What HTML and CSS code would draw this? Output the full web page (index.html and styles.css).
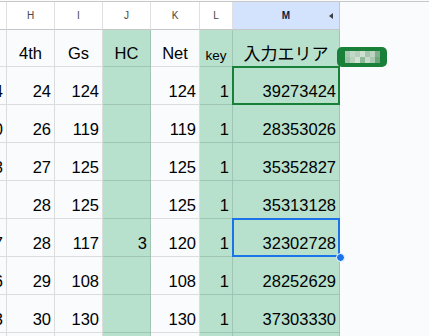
FILE: index.html
```html
<!DOCTYPE html>
<html lang="ja">
<head>
  <meta charset="utf-8">
  <title>スコア入力</title>
  <link rel="stylesheet" href="styles.css">
</head>
<body>
  <div class="viewport">
    <div class="sheet">
      <!-- column letters -->
      <div class="col-hd">G</div>
      <div class="col-hd">H</div>
      <div class="col-hd">I</div>
      <div class="col-hd">J</div>
      <div class="col-hd">K</div>
      <div class="col-hd">L</div>
      <div class="col-hd active">M<span class="hd-menu"></span></div>

      <!-- titles -->
      <div class="cell title">3rd</div>
      <div class="cell title">4th</div>
      <div class="cell title">Gs</div>
      <div class="cell title fill">HC</div>
      <div class="cell title">Net</div>
      <div class="cell title fill small">key</div>
      <div class="cell title fill jp">入力エリア</div>

      <div class="cell">34</div>
      <div class="cell">24</div>
      <div class="cell">124</div>
      <div class="cell fill"></div>
      <div class="cell">124</div>
      <div class="cell fill">1</div>
      <div class="cell fill sel sel-peer">39273424
        <span class="peer-tag">
          <svg width="35" height="12" viewBox="0 0 35 12">
            <rect x="0" y="0" width="5" height="6" fill="#a7c8b0"/>
            <rect x="5" y="0" width="5" height="6" fill="#c3d8c8"/>
            <rect x="10" y="0" width="5" height="6" fill="#b6d0bc"/>
            <rect x="15" y="0" width="5" height="6" fill="#cfe0d3"/>
            <rect x="20" y="0" width="5" height="6" fill="#a4c6ac"/>
            <rect x="25" y="0" width="5" height="6" fill="#bcd4c1"/>
            <rect x="30" y="0" width="5" height="6" fill="#7fb08b"/>
            <rect x="0" y="6" width="5" height="6" fill="#9ec2a7"/>
            <rect x="5" y="6" width="5" height="6" fill="#b9d2be"/>
            <rect x="10" y="6" width="5" height="6" fill="#d2e2d5"/>
            <rect x="15" y="6" width="5" height="6" fill="#8db996"/>
            <rect x="20" y="6" width="5" height="6" fill="#c6dacb"/>
            <rect x="25" y="6" width="5" height="6" fill="#aac9b1"/>
            <rect x="30" y="6" width="5" height="6" fill="#6ea67b"/>
          </svg>
        </span>
      </div>

      <div class="cell">30</div>
      <div class="cell">26</div>
      <div class="cell">119</div>
      <div class="cell fill"></div>
      <div class="cell">119</div>
      <div class="cell fill">1</div>
      <div class="cell fill">28353026</div>

      <div class="cell">28</div>
      <div class="cell">27</div>
      <div class="cell">125</div>
      <div class="cell fill"></div>
      <div class="cell">125</div>
      <div class="cell fill">1</div>
      <div class="cell fill">35352827</div>

      <div class="cell"></div>
      <div class="cell">28</div>
      <div class="cell">125</div>
      <div class="cell fill"></div>
      <div class="cell">125</div>
      <div class="cell fill">1</div>
      <div class="cell fill">35313128</div>

      <div class="cell">27</div>
      <div class="cell">28</div>
      <div class="cell">117</div>
      <div class="cell fill">3</div>
      <div class="cell">120</div>
      <div class="cell fill">1</div>
      <div class="cell fill sel sel-own">32302728<span class="handle"></span></div>

      <div class="cell">26</div>
      <div class="cell">29</div>
      <div class="cell">108</div>
      <div class="cell fill"></div>
      <div class="cell">108</div>
      <div class="cell fill">1</div>
      <div class="cell fill">28252629</div>

      <div class="cell">33</div>
      <div class="cell">30</div>
      <div class="cell">130</div>
      <div class="cell fill"></div>
      <div class="cell">130</div>
      <div class="cell fill">1</div>
      <div class="cell fill">37303330</div>

      <div class="cell"></div>
      <div class="cell"></div>
      <div class="cell"></div>
      <div class="cell fill"></div>
      <div class="cell"></div>
      <div class="cell fill"></div>
      <div class="cell fill"></div>
    </div>
  </div>
</body>
</html>
```

FILE: styles.css
```css
/* Page */
body {
  margin: 0;
  background-color: #f9fbfd;
  font-family: "Liberation Sans", Arial, sans-serif;
  overflow: hidden;
}

.viewport {
  margin-top: 1px;
  border-top: 1px solid #c7c7c7;
  height: 334px;
  overflow: hidden;
}

/* Grid: columns G..M, G is scrolled mostly out of view */
.sheet {
  display: grid;
  grid-template-columns: 48px 48px 48px 48px 49px 33px 107px;
  grid-template-rows: 28px 37px;
  grid-auto-rows: 38px;
  width: max-content;
  margin-left: -41px;
}

.sheet > div {
  box-sizing: border-box;
  border-right: 1px solid rgba(0, 0, 0, 0.12);
  border-bottom: 1px solid rgba(0, 0, 0, 0.12);
}

/* Column letters */
.col-hd {
  display: flex;
  align-items: center;
  justify-content: center;
  background-color: #fff;
  color: #444746;
  font-size: 10px;
  border-bottom-color: #c4c7c5 !important;
}

.col-hd.active {
  position: relative;
  background-color: #d3e3fd;
  color: #041e49;
  font-weight: bold;
}

.hd-menu {
  position: absolute;
  right: 6px;
  top: 11px;
  width: 0;
  height: 0;
  border-top: 3px solid transparent;
  border-bottom: 3px solid transparent;
  border-right: 4px solid #3c4043;
}

/* Cells */
.cell {
  display: flex;
  align-items: flex-end;
  justify-content: flex-end;
  padding: 0 3px 3px;
  font-size: 16.5px;
  color: #000;
  white-space: nowrap;
}

.title {
  justify-content: center;
}

.fill {
  background-color: #b7e1cd;
}

.small {
  font-size: 13.5px;
}

.jp {
  font-family: "Noto Sans CJK JP", sans-serif;
  font-size: 17px;
  padding-bottom: 1px;
}

/* Selections */
.sel {
  position: relative;
}

.sel::after {
  content: "";
  position: absolute;
  left: -1px;
  top: -1px;
  right: -1px;
  bottom: -1px;
  border: 2px solid;
  z-index: 1;
  pointer-events: none;
}

.sel-peer::after {
  border-color: #188038;
}

.sel-own::after {
  border-color: #1a73e8;
}

.handle {
  position: absolute;
  right: -6px;
  bottom: -6px;
  width: 7px;
  height: 7px;
  border-radius: 50%;
  background-color: #1a73e8;
  border: 1px solid #fff;
  z-index: 2;
}

.peer-tag {
  position: absolute;
  left: 104px;
  top: -20px;
  width: 50px;
  height: 20px;
  border-radius: 5px;
  background-color: #188038;
  display: flex;
  align-items: center;
  justify-content: center;
  z-index: 2;
}
```
